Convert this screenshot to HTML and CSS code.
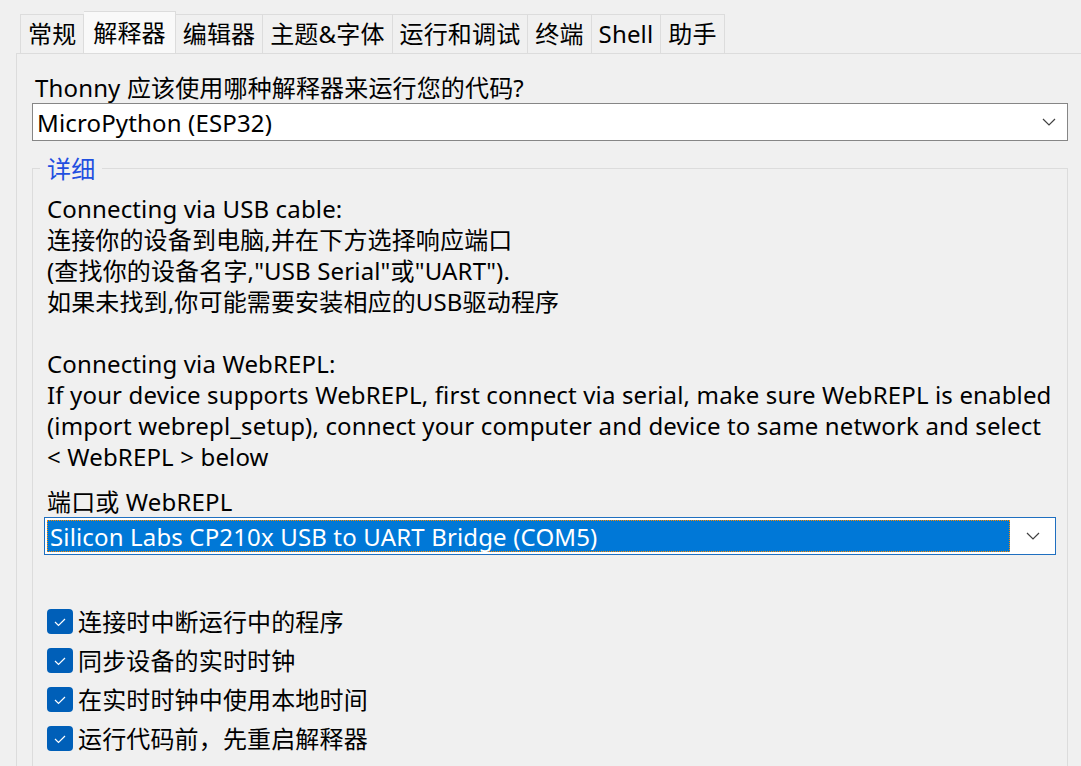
FILE: index.html
```html
<!DOCTYPE html>
<html lang="zh-CN">
<head>
<meta charset="utf-8">
<title>Thonny 选项</title>
<link rel="stylesheet" href="styles.css">
</head>
<body>
<div class="tabs">
  <div class="tab first">常规</div>
  <div class="tab active">解释器</div>
  <div class="tab">编辑器</div>
  <div class="tab">主题&amp;字体</div>
  <div class="tab">运行和调试</div>
  <div class="tab">终端</div>
  <div class="tab">Shell</div>
  <div class="tab">助手</div>
</div>
<div class="pane">
  <div class="question">Thonny 应该使用哪种解释器来运行您的代码?</div>
  <div class="select">
    <span class="select-text">MicroPython (ESP32)</span>
    <svg class="chev" width="14" height="8" viewBox="0 0 14 8"><path d="M1 1 L7 7 L13 1" fill="none" stroke="#404040" stroke-width="1.2"/></svg>
  </div>
  <fieldset class="group">
    <legend>详细</legend>
    <div class="group-body">
      <p class="text">Connecting via USB cable:<br>连接你的设备到电脑,并在下方选择响应端口<br>(查找你的设备名字,"USB Serial"或"UART").<br>如果未找到,你可能需要安装相应的USB驱动程序<br>&nbsp;<br>Connecting via WebREPL:<br>If your device supports WebREPL, first connect via serial, make sure WebREPL is enabled<br>(import webrepl_setup), connect your computer and device to same network and select<br>&lt; WebREPL &gt; below</p>
      <div class="port-label">端口或 WebREPL</div>
      <div class="select port">
        <span class="select-text highlighted">Silicon Labs CP210x USB to UART Bridge (COM5)</span>
        <svg class="chev" width="14" height="8" viewBox="0 0 14 8"><path d="M1 1 L7 7 L13 1" fill="none" stroke="#404040" stroke-width="1.2"/></svg>
      </div>
      <ul class="checks">
        <li><span class="box"><svg width="14" height="10" viewBox="0 0 14 10"><path d="M2 5 L5.5 8.5 L12 2" fill="none" stroke="#fff" stroke-width="1.2"/></svg></span>连接时中断运行中的程序</li>
        <li><span class="box"><svg width="14" height="10" viewBox="0 0 14 10"><path d="M2 5 L5.5 8.5 L12 2" fill="none" stroke="#fff" stroke-width="1.2"/></svg></span>同步设备的实时时钟</li>
        <li><span class="box"><svg width="14" height="10" viewBox="0 0 14 10"><path d="M2 5 L5.5 8.5 L12 2" fill="none" stroke="#fff" stroke-width="1.2"/></svg></span>在实时时钟中使用本地时间</li>
        <li><span class="box"><svg width="14" height="10" viewBox="0 0 14 10"><path d="M2 5 L5.5 8.5 L12 2" fill="none" stroke="#fff" stroke-width="1.2"/></svg></span>运行代码前，先重启解释器</li>
      </ul>
    </div>
  </fieldset>
</div>
</body>
</html>
```

FILE: styles.css
```css
html, body {
  margin: 0;
  padding: 0;
  background: #f0f0f0;
  height: 100%;
  overflow: hidden;
}
body {
  font-family: "Noto Sans", "Noto Sans CJK SC", sans-serif;
  font-size: 24px;
  letter-spacing: 0.15px;
  color: #000;
  line-height: 31px;
  display: flex;
  flex-direction: column;
}
.tabs {
  display: flex;
  align-items: flex-end;
  padding: 11px 0 0 20px;
  height: 53px;
  flex: none;
  box-sizing: border-box;
}
.tab {
  height: 39px;
  box-sizing: border-box;
  border: 1px solid #dcdcdc;
  border-bottom: none;
  border-left: none;
  padding: 3px 7px 0 7px;
  background: #f0f0f0;
  white-space: nowrap;
}
.tab.first {
  border-left: 1px solid #dcdcdc;
}
.tab.active {
  height: 42px;
  background: #f9f9f9;
  padding: 5px 9px 0 9px;
}
.pane {
  flex: 1;
  min-height: 0;
  overflow: hidden;
  display: flex;
  flex-direction: column;
  margin-left: 16px;
  border-left: 1px solid #dcdcdc;
  border-top: 1px solid #dcdcdc;
  padding: 18px 13px 0 15px;
}
.question {
  padding-left: 3px;
}
.select {
  display: flex;
  align-items: center;
  height: 38px;
  flex: none;
  box-sizing: border-box;
  border: 1px solid #868686;
  background: #fff;
  padding: 0 0 0 4px;
}
.select-text {
  flex: 1;
  white-space: nowrap;
}
.chev {
  margin: 0 11px 0 8px;
}
.group {
  flex: 1;
  margin: 12px 0 -20px 0;
  border: 1px solid #dcdcdc;
  padding: 0 0 0 7px;
  min-width: 0;
}
.group legend {
  padding: 0 7px;
  color: #1f4fe0;
}
.group-body {
  padding: 9px 11px 0 7px;
}
.text {
  margin: 0;
}
.port-label {
  margin-top: 14px;
}
.select.port {
  margin-left: -3px;
  border-color: #1f6fc0;
  padding: 2px;
}
.select.port .chev {
  margin: 0 13px 0 16px;
}
.highlighted {
  background: #0078d7;
  color: #fff;
  height: 32px;
  line-height: 31px;
  box-sizing: border-box;
  border: 1px dotted #ff8a00;
  padding-left: 2px;
}
.checks {
  list-style: none;
  margin: 47px 0 0 0;
  padding: 0;
}
.checks li {
  display: flex;
  align-items: center;
  height: 39px;
}
.box {
  width: 26px;
  height: 25px;
  border-radius: 4px;
  background: #005fb8;
  display: flex;
  align-items: center;
  justify-content: center;
  margin-right: 5px;
}
```
